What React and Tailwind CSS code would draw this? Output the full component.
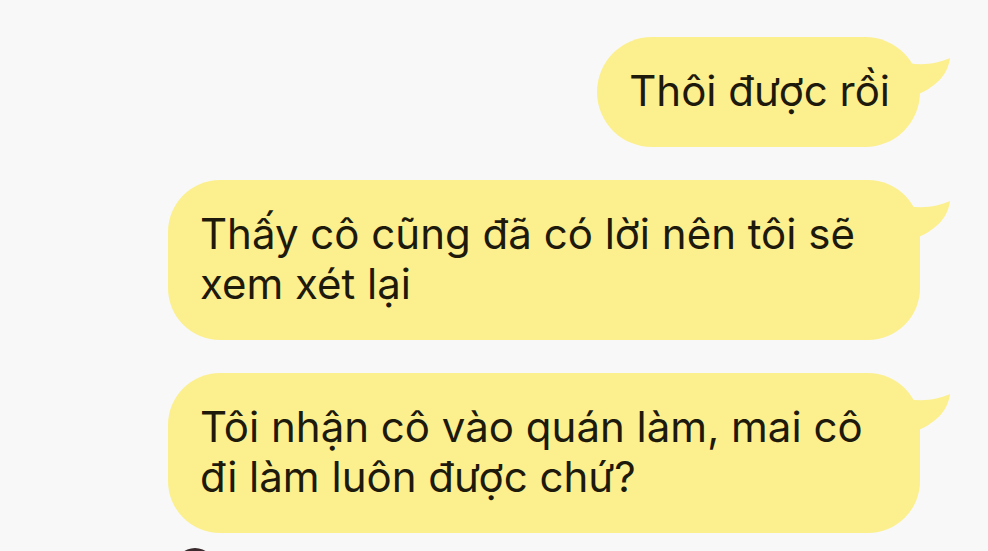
import React from "react";

function Tail() {
  return (
    <svg
      className="absolute right-[-31px] top-[12px]"
      width="42"
      height="48"
      viewBox="0 0 42 48"
    >
      <path d="M0 14 C14 17 30 14 41 9 C39 24 30 36 8 46 Z" fill="#fcef8e" />
    </svg>
  );
}

function Bubble({ children, className }) {
  return (
    <div
      className={
        "relative bg-[#fcef8e] text-[#1d1a0c] text-[42px] leading-[50px] pt-[29px] pb-[31px] pl-[32px] pr-[30px] " +
        className
      }
    >
      <Tail />
      {children}
    </div>
  );
}

export default function App() {
  return (
    <div
      className="w-[988px] h-[551px] overflow-hidden bg-[#f8f8f8] flex flex-col"
      style={{ fontFamily: "Inter, 'Noto Sans', sans-serif" }}
    >
      <div className="flex flex-col items-end pr-[68px] pt-[37px] gap-[33px]">
        <Bubble className="rounded-[55px]">Thôi được rồi</Bubble>
        <Bubble className="rounded-[52px] w-[752px]">
          Thấy cô cũng đã có lời nên tôi sẽ
          <br />
          xem xét lại
        </Bubble>
        <Bubble className="rounded-[52px] w-[752px]">
          Tôi nhận cô vào quán làm, mai cô
          <br />
          đi làm luôn được chứ?
        </Bubble>
      </div>
      <div className="pl-[175px] mt-[15px]">
        <div className="w-[40px] h-[40px] rounded-full bg-[#3a2a2e]" />
      </div>
    </div>
  );
}
